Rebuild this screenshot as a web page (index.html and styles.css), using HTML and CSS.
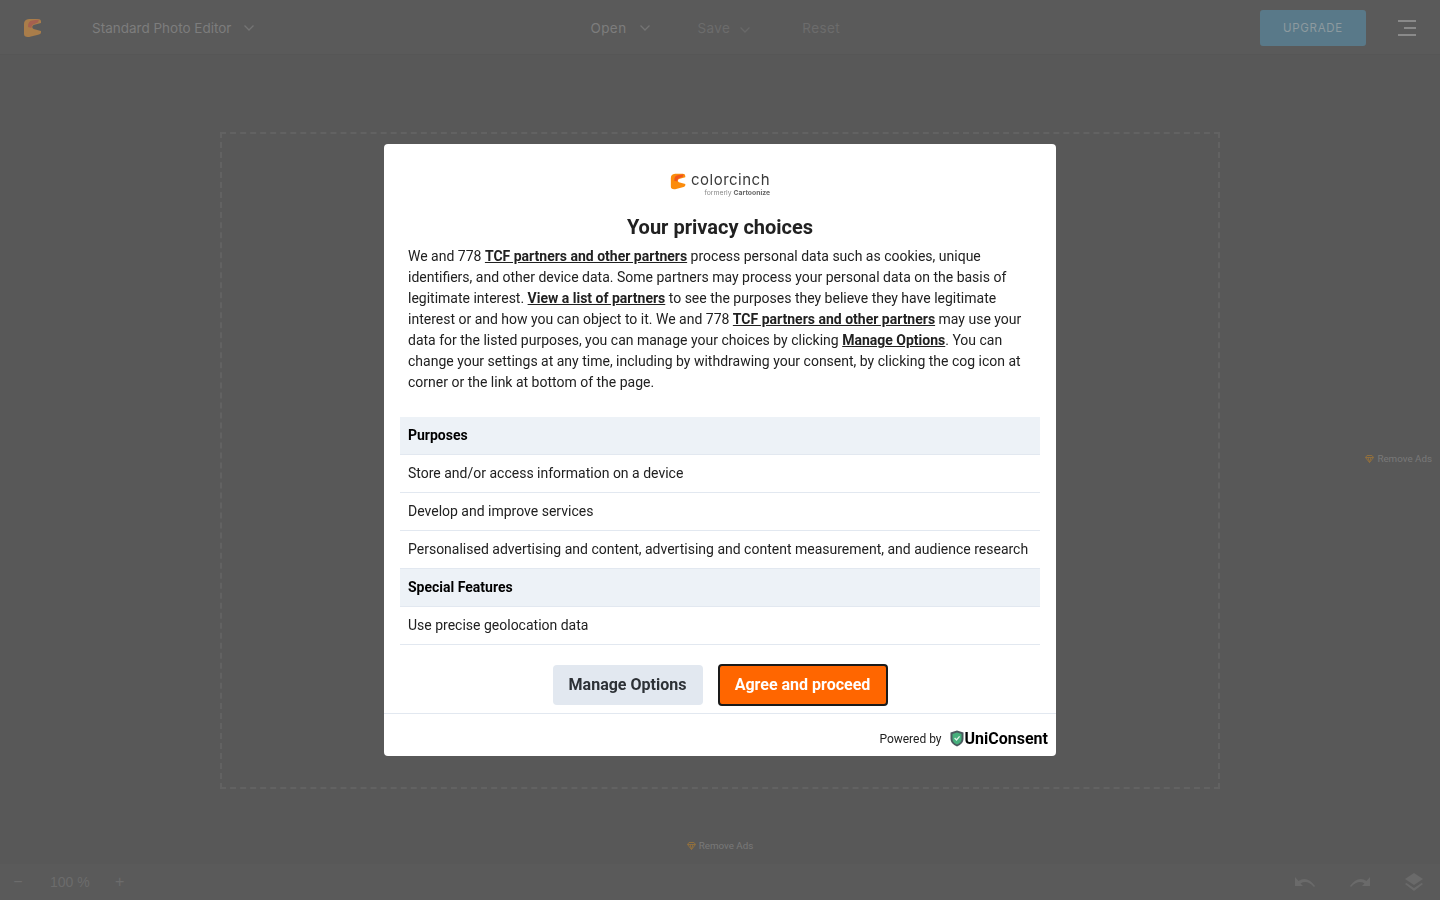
FILE: index.html
```html
<!DOCTYPE html>
<html lang="en">
<head>
  <meta charset="UTF-8">
  <meta name="viewport" content="width=device-width, initial-scale=1.0">
  <title>Colorcinch - Standard Photo Editor</title>
  <link rel="stylesheet" href="styles.css">
</head>
<body>
  <div class="app">
    <header class="topbar">
      <svg class="app-logo" width="20" height="20" viewBox="0 0 20 20">
        <path d="M6 1 H15 Q18 1 18 3.5 V5 L10.5 7 Q8 9 10.5 11 L18 13 V14.5 Q18 16 16 16.5 L6 19 Q1 19.5 1 16 V6 Q1 1.5 6 1 Z" fill="#a97d4a"/>
        <path d="M5 9 Q5 3 9 2.5 L16 1.6 L15 4.5 L10 6.5 Q8 8 8.5 10 Z" fill="#a5604f"/>
      </svg>
      <div class="menu menu-editor">Standard Photo Editor
        <svg class="chevron" width="10" height="6" viewBox="0 0 10 6"><path d="M0.5 0.5 L5 5 L9.5 0.5"/></svg>
      </div>
      <nav class="actions">
        <div class="menu menu-open">Open
          <svg class="chevron" width="10" height="6" viewBox="0 0 10 6"><path d="M0.5 0.5 L5 5 L9.5 0.5"/></svg>
        </div>
        <div class="menu menu-save muted">Save
          <svg class="chevron lower" width="10" height="6" viewBox="0 0 10 6"><path d="M0.5 0.5 L5 5 L9.5 0.5"/></svg>
        </div>
        <div class="menu muted">Reset</div>
      </nav>
      <button class="upgrade">UPGRADE</button>
      <div class="burger"><span></span><span class="short"></span><span></span></div>
    </header>

    <main class="workspace">
      <div class="canvas"></div>
      <a class="remove-ads remove-side" href="#">
        <svg width="9" height="8" viewBox="0 0 9 8"><path d="M2 .5 H7 L8.5 2.5 L4.5 7.5 L.5 2.5 Z M.5 2.5 H8.5 M3 2.5 L4.5 7.5 L6 2.5" class="gem"/></svg>
        Remove Ads</a>
      <a class="remove-ads" href="#">
        <svg width="9" height="8" viewBox="0 0 9 8"><path d="M2 .5 H7 L8.5 2.5 L4.5 7.5 L.5 2.5 Z M.5 2.5 H8.5 M3 2.5 L4.5 7.5 L6 2.5" class="gem"/></svg>
        Remove Ads</a>
    </main>

    <footer class="bottombar">
      <div class="zoom-control">
        <span class="zoom-btn">&minus;</span>
        <span class="zoom-value">100 %</span>
        <span class="zoom-btn">+</span>
      </div>
      <div class="tools">
        <svg width="20" height="12" viewBox="0 0 20 12"><path d="M0 1 L0 10 L8 10 L5.5 7.5 Q12 3.5 19 11 L20 10 Q12 -1 3.5 5 Z"/></svg>
        <svg width="20" height="12" viewBox="0 0 20 12"><path d="M20 1 L20 10 L12 10 L14.5 7.5 Q8 3.5 1 11 L0 10 Q8 -1 16.5 5 Z"/></svg>
        <svg width="18" height="18" viewBox="0 0 18 18"><path d="M9 0 L18 6 L9 12 L0 6 Z"/><path d="M1.5 10 L9 15 L16.5 10 L18 11 L9 18 L0 11 Z"/></svg>
      </div>
    </footer>
  </div>

  <div class="overlay">
    <div class="consent">
      <div class="consent-logo">
        <svg width="17" height="17" viewBox="0 0 20 20">
          <path d="M6 1 H15 Q18 1 18 3.5 V5 L10.5 7 Q8 9 10.5 11 L18 13 V14.5 Q18 16 16 16.5 L6 19 Q1 19.5 1 16 V6 Q1 1.5 6 1 Z" fill="#fb8c0c"/>
          <path d="M5 9 Q5 3 9 2.5 L16 1.6 L15 4.5 L10 6.5 Q8 8 8.5 10 Z" fill="#f0561d"/>
        </svg>
        <div class="logo-words">
          <span class="logo-name">colorcinch</span>
          <span class="logo-sub">formerly <b>Cartoonize</b></span>
        </div>
      </div>
      <h2>Your privacy choices</h2>
      <p class="intro">We and 778 <a href="#">TCF partners and other partners</a> process personal data such as cookies, unique identifiers, and other device data. Some partners may process your personal data on the basis of legitimate interest. <a href="#">View a list of partners</a> to see the purposes they believe they have legitimate interest or and how you can object to it. We and 778 <a href="#">TCF partners and other partners</a> may use your data for the listed purposes, you can manage your choices by clicking <a href="#">Manage Options</a>. You can change your settings at any time, including by withdrawing your consent, by clicking the cog icon at corner or the link at bottom of the page.</p>
      <ul class="purposes">
        <li class="heading">Purposes</li>
        <li>Store and/or access information on a device</li>
        <li>Develop and improve services</li>
        <li>Personalised advertising and content, advertising and content measurement, and audience research</li>
        <li class="heading">Special Features</li>
        <li>Use precise geolocation data</li>
      </ul>
      <div class="consent-buttons">
        <button class="btn btn-manage">Manage Options</button>
        <button class="btn btn-agree">Agree and proceed</button>
      </div>
      <div class="consent-footer">
        <span class="powered">Powered by</span>
        <svg width="14" height="17" viewBox="0 0 14 17">
          <path d="M7 .5 L13.5 2.5 V9 Q13.5 14 7 16.5 Q.5 14 .5 9 V2.5 Z" fill="#4b5a5f"/>
          <path d="M7 2.5 L11.5 4 V9 Q11.5 12.5 7 14.5 Q2.5 12.5 2.5 9 V4 Z" fill="#46b07c"/>
          <path d="M4.6 8 L6.5 10 L9.6 6.4" fill="none" stroke="#dff3e8" stroke-width="1.3"/>
        </svg>
        <span class="uni">UniConsent</span>
      </div>
    </div>
  </div>
</body>
</html>
```

FILE: styles.css
```css
* {
  margin: 0;
  padding: 0;
  box-sizing: border-box;
}

body {
  background-color: #585858;
  font-family: 'Roboto', sans-serif;
  overflow: hidden;
}

.app {
  display: flex;
  flex-direction: column;
  height: 100vh;
  color: #7d7d7d;
}

/* Top bar */
.topbar {
  height: 55px;
  flex-shrink: 0;
  display: flex;
  align-items: center;
  background-color: #5a5a5a;
  border-bottom: 1px solid #565656;
  font-family: 'Inter', sans-serif;
  font-size: 13.5px;
  padding: 2px 24px 0 23px;
}

.app-logo {
  margin-right: 49px;
}

.menu {
  display: flex;
  align-items: center;
  gap: 13px;
}

.menu.muted {
  color: #6c6c6c;
}

.chevron {
  fill: none;
  stroke: #747474;
  stroke-width: 1.3;
}

.chevron.lower {
  margin-top: 3px;
  margin-left: -3px;
  stroke: #686868;
}

.actions {
  display: flex;
  align-items: center;
  margin-left: 336px;
  letter-spacing: 0.4px;
}

.menu-open {
  margin-right: 48px;
}

.menu-save {
  margin-right: 52px;
}

.upgrade {
  margin-left: auto;
  width: 106px;
  height: 36px;
  background-color: #597989;
  color: #8d9a9f;
  border: none;
  border-radius: 3px;
  font-family: 'Inter', sans-serif;
  font-size: 11.5px;
  font-weight: 400;
  letter-spacing: 0.7px;
}

.burger {
  width: 18px;
  margin-left: 32px;
  display: flex;
  flex-direction: column;
  align-items: flex-end;
  gap: 5px;
}

.burger span {
  width: 18px;
  height: 2px;
  background-color: #8a8a8a;
}

.burger .short {
  width: 12px;
}

/* Workspace */
.workspace {
  flex: 1;
  position: relative;
  display: flex;
  flex-direction: column;
  align-items: center;
  padding-top: 77px;
}

.canvas {
  width: 1000px;
  height: 657px;
  flex-shrink: 0;
  border: 2px dashed #626262;
}

.remove-ads {
  margin-top: 51px;
  font-family: 'Roboto', sans-serif;
  font-size: 9.8px;
  color: #787878;
  text-decoration: none;
  display: flex;
  align-items: center;
  gap: 3px;
}

.remove-side {
  position: absolute;
  top: 398px;
  right: 8px;
  margin-top: 0;
}

.gem {
  fill: none;
  stroke: #8f6f3f;
  stroke-width: 1;
}

/* Bottom bar */
.bottombar {
  height: 36px;
  flex-shrink: 0;
  display: flex;
  align-items: center;
  justify-content: space-between;
  background-color: #5a5a5a;
  padding: 0 17px 0 13px;
  color: #6c6c6c;
}

.zoom-control {
  display: flex;
  align-items: center;
  font-family: 'Liberation Sans', sans-serif;
  font-size: 14px;
}

.zoom-btn {
  font-size: 16px;
  width: 10px;
  text-align: center;
}

.zoom-value {
  margin: 0 25px 0 27px;
}

.tools {
  display: flex;
  align-items: center;
  gap: 35px;
}

.tools svg {
  fill: #6a6a6a;
}

/* Consent dialog */
.overlay {
  position: fixed;
  inset: 0;
  display: flex;
  align-items: flex-start;
  justify-content: center;
  padding-top: 144px;
}

.consent {
  width: 672px;
  height: 612px;
  background-color: #fff;
  border-radius: 4px;
  color: #212121;
  font-size: 14px;
  display: flex;
  flex-direction: column;
}

.consent-logo {
  height: 48px;
  flex-shrink: 0;
  margin-top: 16px;
  display: flex;
  align-items: flex-start;
  justify-content: center;
  gap: 4px;
  padding-top: 13px;
}

.logo-words {
  display: flex;
  flex-direction: column;
  margin-top: -1px;
}

.logo-name {
  font-family: 'Inter', sans-serif;
  font-size: 15px;
  line-height: 16px;
  letter-spacing: 0.5px;
  color: #3a3a3a;
}

.logo-sub {
  font-family: 'Inter', sans-serif;
  font-size: 6.8px;
  line-height: 9px;
  color: #8a8a8a;
  text-align: right;
}

.logo-sub b {
  color: #666;
}

.consent h2 {
  margin-top: 4px;
  font-size: 20px;
  font-weight: 700;
  line-height: 30px;
  text-align: center;
  color: #212121;
}

.intro {
  margin-top: 4px;
  padding: 0 24px;
  line-height: 21px;
}

.intro a {
  color: #212121;
  font-weight: 700;
  text-decoration: underline;
}

.purposes {
  list-style: none;
  margin: 24px 16px 0;
}

.purposes li {
  height: 38px;
  padding: 0 8px 2px;
  display: flex;
  align-items: center;
  border-bottom: 1px solid #e2e8f0;
}

.purposes .heading {
  background-color: #edf2f7;
  font-weight: 700;
  color: #000;
}

.consent-buttons {
  display: flex;
  justify-content: center;
  align-items: center;
  gap: 15px;
  padding: 19px 0 7px;
  border-bottom: 1px solid #e2e8f0;
}

.btn {
  font-family: 'Roboto', sans-serif;
  font-size: 16px;
  font-weight: 700;
  border-radius: 4px;
  padding-bottom: 2px;
}

.btn-manage {
  width: 150px;
  height: 40px;
  background-color: #e2e8f0;
  color: #2d3136;
  border: none;
}

.btn-agree {
  width: 170px;
  height: 42px;
  background-color: #ff6600;
  color: #fff;
  border: 2px solid #1a1a1a;
}

.consent-footer {
  flex: 1;
  display: flex;
  align-items: center;
  justify-content: flex-end;
  padding: 7px 8px 0;
}

.powered {
  font-size: 12px;
  margin-right: 8px;
  color: #212121;
}

.uni {
  font-size: 16px;
  font-weight: 700;
  color: #000;
  margin-left: 1px;
}
```
